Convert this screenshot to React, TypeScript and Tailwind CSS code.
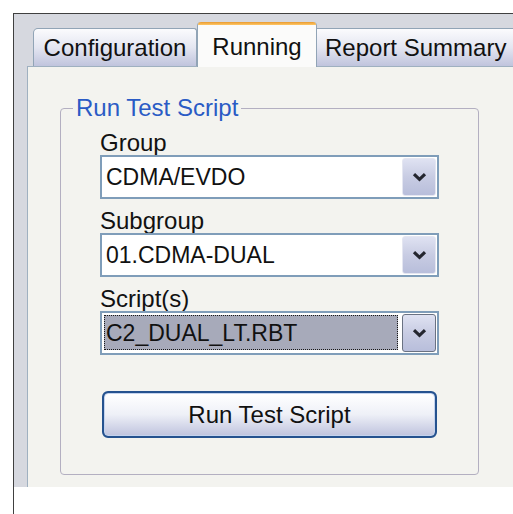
import React from "react";

const font = "font-['Liberation_Sans','Arial',sans-serif]";

function Chevron() {
  return (
    <svg width="15" height="10" viewBox="0 0 15 10" aria-hidden="true">
      <path
        d="M2 2.2 L7.5 7.4 L13 2.2"
        fill="none"
        stroke="#24262f"
        strokeWidth="3.2"
        strokeLinecap="butt"
        strokeLinejoin="miter"
      />
    </svg>
  );
}

function Combo({ value, focused = false }: { value: string; focused?: boolean }) {
  return (
    <div className="flex h-[44px] w-[339px] border-2 border-[#7f9db9] bg-white p-px">
      {focused ? (
        <div className="mb-[2px] ml-[1px] mr-[4px] mt-px flex flex-1 items-center border border-dotted border-[#1a1a1a] bg-[#a7aaba] pl-[1px]">
          <span className="leading-[30px] text-[23px] text-[#111]">{value}</span>
        </div>
      ) : (
        <div className="flex flex-1 items-center pl-[3px]">
          <span className="leading-[38px] text-[23px] text-[#111]">{value}</span>
        </div>
      )}
      <div
        className={
          "flex w-[34px] items-center justify-center rounded-[3px] border bg-gradient-to-b from-[#dfe2f2] via-[#c8cce3] to-[#b8bedb] " +
          (focused ? "border-[#6a7282]" : "border-[#e4e6f1]")
        }
      >
        <Chevron />
      </div>
    </div>
  );
}

function Field({ label, value, focused }: { label: string; value: string; focused?: boolean }) {
  return (
    <div className="flex flex-col">
      <div className="h-[24px] leading-[24px] text-[24px] text-[#111]">{label}</div>
      <Combo value={value} focused={focused} />
    </div>
  );
}

export default function App() {
  return (
    <div className={`flex h-[514px] w-[513px] flex-col overflow-hidden bg-white pl-[13px] pt-[13px] ${font}`}>
      <div className="flex flex-1 flex-col border-l border-t border-[#404040]">
        <div className="flex h-[473px] flex-col bg-[#d6d8df] pl-[13px]">
          {/* tab strip */}
          <div className="flex h-[52px] shrink-0 items-end pl-[6px]">
            <div className="flex h-[38px] w-[164px] shrink-0 items-center justify-center rounded-tl-[5px] rounded-tr-[3px] border border-b-0 border-[#91a4b6] bg-gradient-to-b from-[#fbfbfd] via-[#e4e6f1] to-[#c0c4dd]">
              <span className="leading-[38px] text-[24px] text-[#111]">Configuration</span>
            </div>
            <div className="relative z-10 -mb-px flex h-[45px] w-[120px] shrink-0 flex-col rounded-t-[4px] border-x border-[#91a4b6] bg-[#fbfbfa]">
              <div className="h-[3px] rounded-t-[4px] bg-gradient-to-b from-[#e89a2c] to-[#ffc765]" />
              <div className="flex justify-center pt-[3px]">
                <span className="leading-[38px] text-[24px] text-[#111]">Running</span>
              </div>
            </div>
            <div className="flex h-[38px] w-[220px] shrink-0 items-center rounded-tr-[4px] border border-b-0 border-l-0 border-[#91a4b6] bg-gradient-to-b from-[#fbfbfd] via-[#e4e6f1] to-[#c0c4dd] pl-[8px]">
              <span className="leading-[38px] text-[24px] text-[#111]">Report Summary</span>
            </div>
          </div>

          {/* page */}
          <div className="flex flex-1 flex-col border-l border-t border-[#9fb0c0] bg-[#f3f3ef]">
            <fieldset className="ml-[32px] mt-[29px] h-[379px] w-[419px] rounded-[4px] border border-[#b3afc1]">
              <legend className="ml-[12px] px-[3px] leading-[24px] text-[24px] text-[#2a5bc5]">Run Test Script</legend>
              <div className="flex flex-col gap-[10px] pl-[39px] pt-[11px]">
                <Field label="Group" value="CDMA/EVDO" />
                <Field label="Subgroup" value="01.CDMA-DUAL" />
                <Field label="Script(s)" value="C2_DUAL_LT.RBT" focused />
              </div>
              <div className="ml-[41px] mt-[36px] h-[47px] w-[335px] rounded-[6px] border-2 border-[#25528f] bg-[#25528f]">
                <div className="flex h-full items-center justify-center rounded-[4px] border border-[#c4d3ee] bg-gradient-to-b from-[#ffffff] via-[#eef0f7] to-[#c1c5df]">
                  <span className="leading-[38px] text-[24px] text-[#111]">Run Test Script</span>
                </div>
              </div>
            </fieldset>
          </div>
        </div>
      </div>
    </div>
  );
}
